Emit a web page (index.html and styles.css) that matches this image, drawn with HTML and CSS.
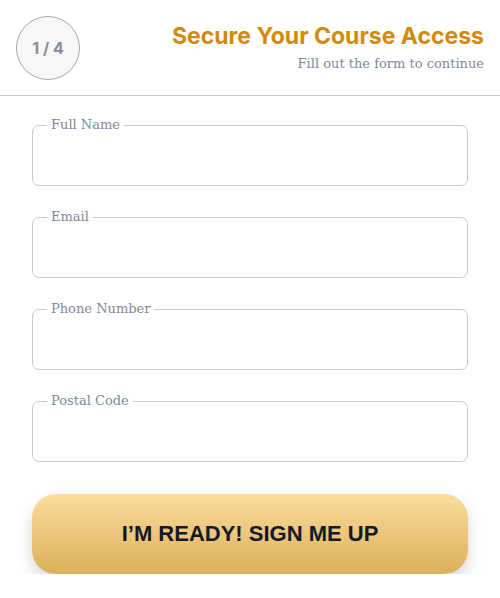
FILE: index.html
```html
<!DOCTYPE html>
<html lang="en">
<head>
    <meta charset="UTF-8">
    <meta name="viewport" content="width=device-width, initial-scale=1.0">
    <title>Secure Your Course Access</title>
    <link rel="stylesheet" href="styles.css">
</head>
<body>
    <header class="header">
        <div class="step">1 / 4</div>
        <div class="heading">
            <h1>Secure Your Course Access</h1>
            <p>Fill out the form to continue</p>
        </div>
    </header>

    <form class="signup">
        <fieldset class="field">
            <legend>Full Name</legend>
            <input type="text" id="name">
        </fieldset>
        <fieldset class="field">
            <legend>Email</legend>
            <input type="email" id="email">
        </fieldset>
        <fieldset class="field">
            <legend>Phone Number</legend>
            <input type="tel" id="phone">
        </fieldset>
        <fieldset class="field">
            <legend>Postal Code</legend>
            <input type="text" id="postal">
        </fieldset>

        <button type="button" class="cta">I’M READY! SIGN ME UP</button>
    </form>
</body>
</html>
```

FILE: styles.css
```css
body {
    margin: 0;
    background-color: #fff;
    font-family: "Roboto Slab", "DejaVu Serif", serif;
}
.header {
    display: flex;
    justify-content: space-between;
    align-items: flex-start;
    height: 96px;
    padding: 0 16px;
    border-bottom: 1px solid #c8c8c8;
    box-sizing: border-box;
}
.step {
    width: 64px;
    height: 64px;
    margin-top: 16px;
    border: 1px solid #a3a7b0;
    border-radius: 50%;
    background-color: #f6f7f9;
    box-sizing: border-box;
    display: flex;
    justify-content: center;
    align-items: center;
    font-family: Inter, sans-serif;
    font-weight: 700;
    font-size: 16px;
    color: #888d98;
}
.heading {
    text-align: right;
    padding-top: 22px;
}
.heading h1 {
    margin: 0;
    font-family: Inter, sans-serif;
    font-size: 23px;
    font-weight: 700;
    line-height: 28px;
    color: #d4890c;
}
.heading p {
    margin: 4px 0 0;
    font-size: 13px;
    line-height: 20px;
    color: #7e8a9e;
}
.signup {
    padding: 20px 32px 0;
}
.field {
    margin: 0 0 22px;
    padding: 0 14px;
    border: 1px solid #cacaca;
    border-radius: 7px;
}
.field legend {
    padding: 0 4px;
    font-size: 13px;
    line-height: 18px;
    color: #7b899d;
}
.field input {
    display: block;
    width: 100%;
    height: 51px;
    border: none;
    outline: none;
    padding: 0;
    background: transparent;
}
.cta {
    display: block;
    width: 100%;
    height: 80px;
    margin-top: 32px;
    border: none;
    border-radius: 24px;
    background: linear-gradient(to bottom, #fbdd9c, #dcaf5a);
    box-shadow: 0 8px 16px rgba(0, 0, 0, 0.16);
    font-family: "Liberation Sans", Arial, sans-serif;
    font-size: 22px;
    font-weight: 700;
    color: #141829;
    cursor: pointer;
}
```
